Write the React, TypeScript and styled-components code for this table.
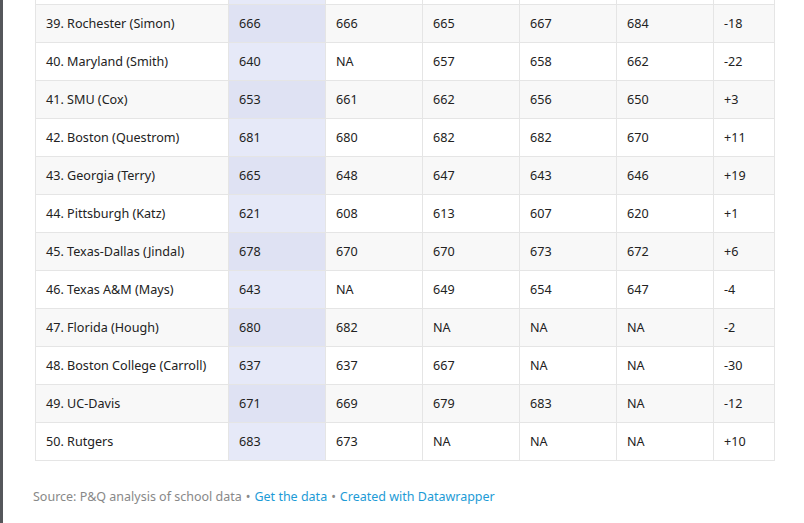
import React from "react";
import styled, { createGlobalStyle } from "styled-components";

const Global = createGlobalStyle`
  html, body { margin: 0; padding: 0; background: #fff; overflow: hidden; }
  body { font-family: "Noto Sans", "Open Sans", sans-serif; }
`;

const Page = styled.div`
  display: flex;
  height: 523px;
  width: 804px;
  overflow: hidden;
`;

const LeftBar = styled.div`
  width: 3px;
  flex: none;
  background: #55575b;
`;

const Content = styled.div`
  padding-left: 32px;
  display: flex;
  flex-direction: column;
`;

const Table = styled.div`
  width: 739px;
  border-left: 1px solid #e5e5e5;
  color: #222;
  font-size: 12.6px;
`;

const Row = styled.div<{ $striped?: boolean; $h?: number }>`
  display: grid;
  grid-template-columns: 193px 97px 97px 97px 97px 97px 61px;
  height: ${(p) => p.$h ?? 38}px;
  box-sizing: border-box;
  border-bottom: 1px solid #e5e5e5;
  background: ${(p) => (p.$striped ? "#f8f8f8" : "#fff")};
`;

const Cell = styled.div<{ $hl?: boolean; $striped?: boolean }>`
  box-sizing: border-box;
  border-right: 1px solid #e5e5e5;
  padding: 0 10px 1px 10px;
  display: flex;
  align-items: center;
  white-space: nowrap;
  overflow: hidden;
  background: ${(p) => (p.$hl ? (p.$striped ? "#dfe2f3" : "#e6e9f8") : "transparent")};
`;

const Footer = styled.div`
  margin-top: 27px;
  margin-left: -2px;
  font-size: 12.5px;
  color: #888;
`;

const Link = styled.a`
  color: #1d9bd6;
  text-decoration: none;
`;

const Sep = styled.span`
  color: #888;
  margin: 0 4px;
`;

const rows: string[][] = [
  ["39. Rochester (Simon)", "666", "666", "665", "667", "684", "-18"],
  ["40. Maryland (Smith)", "640", "NA", "657", "658", "662", "-22"],
  ["41. SMU (Cox)", "653", "661", "662", "656", "650", "+3"],
  ["42. Boston (Questrom)", "681", "680", "682", "682", "670", "+11"],
  ["43. Georgia (Terry)", "665", "648", "647", "643", "646", "+19"],
  ["44. Pittsburgh (Katz)", "621", "608", "613", "607", "620", "+1"],
  ["45. Texas-Dallas (Jindal)", "678", "670", "670", "673", "672", "+6"],
  ["46. Texas A&M (Mays)", "643", "NA", "649", "654", "647", "-4"],
  ["47. Florida (Hough)", "680", "682", "NA", "NA", "NA", "-2"],
  ["48. Boston College (Carroll)", "637", "637", "667", "NA", "NA", "-30"],
  ["49. UC-Davis", "671", "669", "679", "683", "NA", "-12"],
  ["50. Rutgers", "683", "673", "NA", "NA", "NA", "+10"],
];

export default function App() {
  return (
    <>
      <Global />
      <Page>
        <LeftBar />
        <Content>
          <Table>
            <Row $h={5}>
              {Array.from({ length: 7 }).map((_, i) => (
                <Cell key={i} $hl={i === 1} />
              ))}
            </Row>
            {rows.map((r, ri) => {
              const striped = ri % 2 === 0;
              return (
                <Row key={ri} $striped={striped}>
                  {r.map((c, ci) => (
                    <Cell key={ci} $hl={ci === 1} $striped={striped}>
                      {c}
                    </Cell>
                  ))}
                </Row>
              );
            })}
          </Table>
          <Footer>
            Source: P&amp;Q analysis of school data<Sep>•</Sep>
            <Link href="#">Get the data</Link>
            <Sep>•</Sep>
            <Link href="#">Created with Datawrapper</Link>
          </Footer>
        </Content>
      </Page>
    </>
  );
}
